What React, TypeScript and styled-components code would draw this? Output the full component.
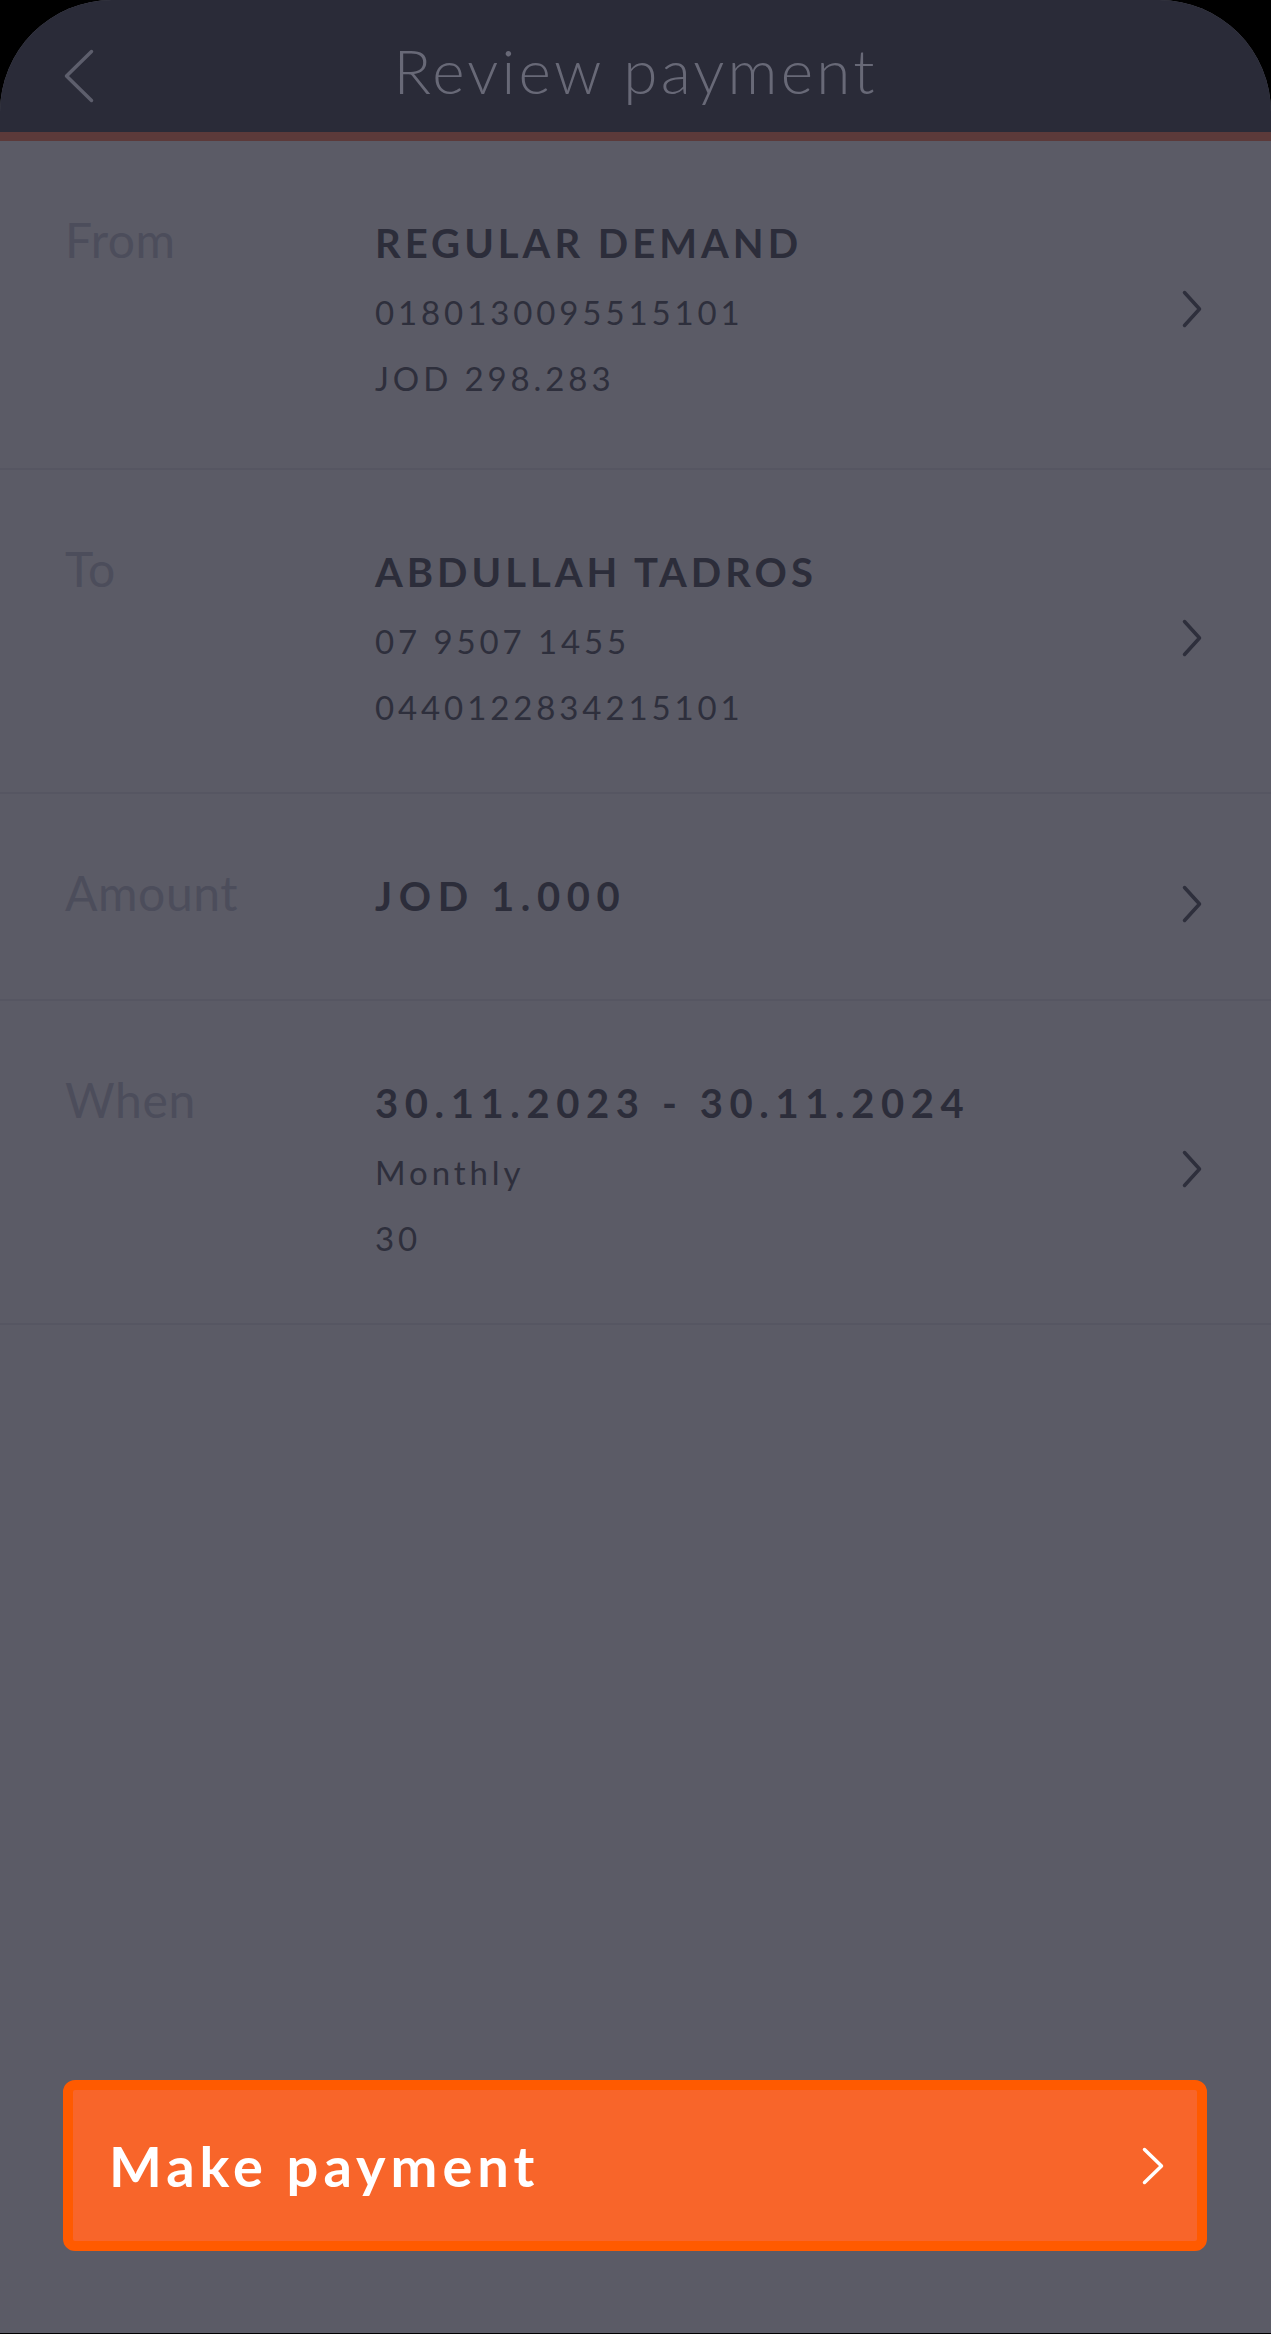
import styled, { createGlobalStyle } from "styled-components";

type Detail = {
  label: string;
  title: string;
  numeric?: boolean;
  lines?: string[];
};

const details: Detail[] = [
  {
    label: "From",
    title: "REGULAR DEMAND",
    lines: ["0180130095515101", "JOD 298.283"],
  },
  {
    label: "To",
    title: "ABDULLAH TADROS",
    lines: ["07 9507 1455", "0440122834215101"],
  },
  { label: "Amount", title: "JOD 1.000", numeric: true },
  {
    label: "When",
    title: "30.11.2023 - 30.11.2024",
    numeric: true,
    lines: ["Monthly", "30"],
  },
];

const GlobalStyle = createGlobalStyle`
  html, body {
    margin: 0;
    padding: 0;
    background: #000;
  }
  body {
    font-family: Lato, "Open Sans", Arial, sans-serif;
    -webkit-font-smoothing: antialiased;
  }
  * {
    box-sizing: border-box;
  }
`;

const Screen = styled.div`
  width: 1271px;
  min-height: 2333px;
  background: #5b5b66;
  border-radius: 112px 112px 0 0;
  overflow: hidden;
  display: flex;
  flex-direction: column;
`;

const Header = styled.header`
  height: 141px;
  background: #2a2b38;
  border-bottom: 9px solid #5c3a3a;
  display: grid;
  grid-template-columns: 1fr auto 1fr;
  align-items: center;
  padding-top: 12px;
`;

const BackButton = styled.button`
  justify-self: start;
  margin: 8px 0 0 63px;
  padding: 0;
  border: 0;
  background: transparent;
  display: flex;
  align-items: center;
  cursor: pointer;
`;

const Title = styled.h1`
  margin: 0;
  font-family: Lato, sans-serif;
  font-weight: 300;
  font-size: 62px;
  letter-spacing: 3.2px;
  color: #686977;
  line-height: 1;
  padding-bottom: 4px;
`;

const List = styled.div`
  display: flex;
  flex-direction: column;
`;

const Row = styled.div<{ $first?: boolean }>`
  display: flex;
  align-items: center;
  min-height: 207px;
  padding: 66px 68px ${(props) => (props.$first ? "57px" : "52px")} 65px;
  border-bottom: 2px solid #565662;
`;

const RowBody = styled.div`
  flex: 1;
  align-self: flex-start;
  display: flex;
  align-items: baseline;
`;

const Label = styled.div`
  width: 310px;
  flex-shrink: 0;
  font-size: 48px;
  line-height: 66px;
  font-weight: 400;
  letter-spacing: 0.6px;
  color: #4c4d5b;
`;

const Values = styled.div`
  display: flex;
  flex-direction: column;
`;

const ValueTitle = styled.div<{ $numeric?: boolean }>`
  font-size: 40px;
  line-height: 72px;
  font-weight: 700;
  letter-spacing: ${(props) => (props.$numeric ? "6.6px" : "4px")};
  color: #2c2d3a;
`;

const ValueLine = styled.div`
  font-size: 33px;
  line-height: 66px;
  font-weight: 400;
  letter-spacing: 3.9px;
  color: #2e2f3c;
`;

const Spacer = styled.div`
  flex: 1;
`;

const Footer = styled.div`
  padding: 0 64px 82px 63px;
`;

const PayButton = styled.button`
  width: 100%;
  height: 171px;
  border: 10px solid #ff5a00;
  border-radius: 12px;
  background: #f8652a;
  display: flex;
  align-items: center;
  justify-content: space-between;
  padding: 0 32px 0 36px;
  font-family: Lato, sans-serif;
  font-size: 56px;
  font-weight: 700;
  letter-spacing: 5px;
  color: #ffffff;
  cursor: pointer;
`;

const Chevron = ({ color, dir = "right", w = 20, h = 38, stroke = 3.5 }: {
  color: string;
  dir?: "left" | "right";
  w?: number;
  h?: number;
  stroke?: number;
}) => {
  const pad = stroke;
  const d =
    dir === "right"
      ? `M${pad} ${pad} L${w - pad} ${h / 2} L${pad} ${h - pad}`
      : `M${w - pad} ${pad} L${pad} ${h / 2} L${w - pad} ${h - pad}`;
  return (
    <svg width={w} height={h} viewBox={`0 0 ${w} ${h}`} fill="none">
      <path
        d={d}
        stroke={color}
        strokeWidth={stroke}
        strokeLinecap="round"
        strokeLinejoin="round"
      />
    </svg>
  );
};

export default function App() {
  return (
    <>
      <GlobalStyle />
      <Screen>
        <Header>
          <BackButton aria-label="Back">
            <Chevron color="#5d5e6c" dir="left" w={32} h={56} stroke={3.5} />
          </BackButton>
          <Title>Review payment</Title>
          <span />
        </Header>
        <List>
          {details.map((item, index) => (
            <Row key={item.label} $first={index === 0}>
              <RowBody>
                <Label>{item.label}</Label>
                <Values>
                  <ValueTitle $numeric={item.numeric}>{item.title}</ValueTitle>
                  {item.lines?.map((line) => (
                    <ValueLine key={line}>{line}</ValueLine>
                  ))}
                </Values>
              </RowBody>
              <Chevron color="#2e2f3c" w={22} h={40} stroke={3.5} />
            </Row>
          ))}
        </List>
        <Spacer />
        <Footer>
          <PayButton>
            Make payment
            <Chevron color="#ffffff" w={24} h={40} stroke={3.5} />
          </PayButton>
        </Footer>
      </Screen>
    </>
  );
}
